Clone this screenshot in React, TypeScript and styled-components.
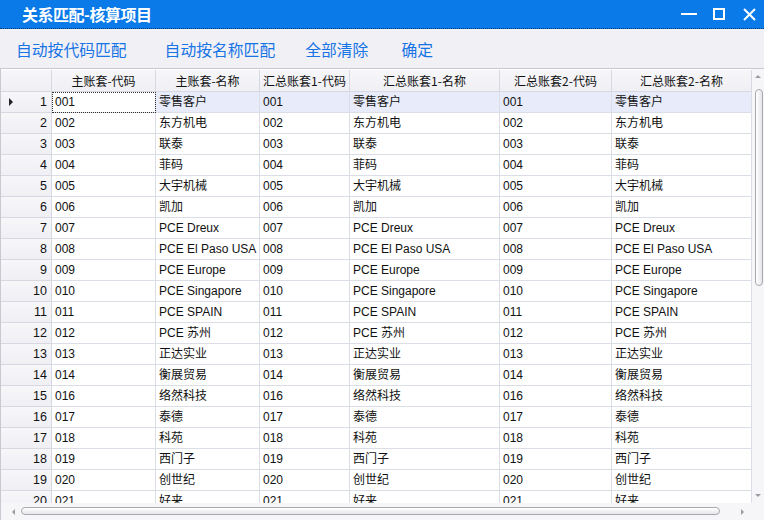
import React from 'react'
import styled, { createGlobalStyle } from 'styled-components'

const GlobalStyle = createGlobalStyle`
  html, body {
    margin: 0;
    padding: 0;
    overflow: hidden;
    background: #ffffff;
  }
`

const COLS = '51px 104px 104px 90px 150px 112px 140px'

const Window = styled.div`
  width: 764px;
  height: 520px;
  display: flex;
  flex-direction: column;
  background: #f1f0f5;
  font-family: 'Liberation Sans', 'Noto Sans CJK SC', sans-serif;
  overflow: hidden;
`

const TitleBar = styled.div`
  height: 28px;
  flex: none;
  display: flex;
  align-items: center;
  justify-content: space-between;
  background: #0a7ae9;
  border-bottom: 1px dotted #0b3a70;
  padding-left: 22px;
`

const Title = styled.div`
  color: #ffffff;
  font-family: 'Noto Sans CJK SC', sans-serif;
  font-size: 16px;
  font-weight: 700;
  letter-spacing: -0.5px;
`

const Controls = styled.div`
  display: flex;
  align-items: center;
  height: 100%;
`

const ControlButton = styled.div`
  width: 30px;
  height: 28px;
  display: flex;
  align-items: center;
  justify-content: center;
`

const Toolbar = styled.div`
  height: 39px;
  flex: none;
  display: flex;
  align-items: center;
  padding-left: 16px;
  padding-top: 1px;
  box-sizing: border-box;
`

const ToolLink = styled.span<{ $gap: number }>`
  color: #1774e5;
  font-family: 'Noto Sans CJK SC', sans-serif;
  font-size: 15.8px;
  margin-right: ${({ $gap }) => $gap}px;
  cursor: pointer;
`

const GridFrame = styled.div`
  flex: 1;
  display: flex;
  flex-direction: column;
  background: #ffffff;
  border-top: 1px solid #c9c9d2;
  border-left: 1px solid #c9c9d2;
  min-height: 0;
`

const GridMain = styled.div`
  flex: 1;
  display: flex;
  min-height: 0;
`

const Body = styled.div`
  flex: 1;
  overflow: hidden;
  padding-top: 1px;
`

const Row = styled.div`
  display: grid;
  grid-template-columns: ${COLS};
  height: 21px;
`

const HeaderRow = styled(Row)`
  height: 22px;
`

const HeadCell = styled.div`
  background: linear-gradient(#f7f7fa, #efeff4);
  border-right: 1px solid #d6d8e2;
  border-bottom: 1px solid #d6d8e2;
  font-family: 'Noto Sans CJK SC', sans-serif;
  font-size: 12px;
  line-height: 21px;
  color: #111;
  text-align: center;
  white-space: nowrap;
  overflow: hidden;
`

const RowHead = styled.div`
  background: linear-gradient(#f7f7fa, #efeff4);
  border-right: 1px solid #d6d8e2;
  border-bottom: 1px solid #d6d8e2;
  position: relative;
  text-align: right;
  padding-right: 4px;
  font-size: 12.5px;
  line-height: 20px;
  color: #111;
`

const Pointer = styled.span`
  position: absolute;
  left: 8px;
  top: 6px;
  width: 0;
  height: 0;
  border-top: 4px solid transparent;
  border-bottom: 4px solid transparent;
  border-left: 4px solid #222;
`

const Cell = styled.div<{ $selected?: boolean; $focus?: boolean }>`
  background: ${({ $selected, $focus }) => ($focus ? '#ffffff' : $selected ? '#e8ecfa' : '#ffffff')};
  border-right: 1px solid #dcdee7;
  border-bottom: 1px solid #dcdee7;
  outline: ${({ $focus }) => ($focus ? '1px dotted #333' : 'none')};
  outline-offset: -1px;
  font-family: 'Liberation Sans', 'Noto Sans CJK SC', sans-serif;
  font-size: 12px;
  line-height: 20px;
  color: #111;
  padding-left: 3px;
  white-space: nowrap;
  overflow: hidden;
`

const VScroll = styled.div`
  width: 12px;
  flex: none;
  background: #f6f6f8;
  position: relative;
`

const VThumb = styled.div`
  position: absolute;
  left: 3px;
  top: 20px;
  width: 6px;
  height: 195px;
  border: 1px solid #a9a9b0;
  border-radius: 4px;
  background: linear-gradient(90deg, #ffffff, #e6e6ea);
`

const Arrow = styled.span<{ $dir: 'up' | 'down' | 'left' | 'right' }>`
  position: absolute;
  width: 0;
  height: 0;
  ${({ $dir }) =>
    $dir === 'up'
      ? 'top: 6px; left: 3px; border-left: 3px solid transparent; border-right: 3px solid transparent; border-bottom: 3px solid #9a9aa2;'
      : $dir === 'down'
        ? 'bottom: 6px; left: 3px; border-left: 3px solid transparent; border-right: 3px solid transparent; border-top: 3px solid #9a9aa2;'
        : $dir === 'left'
          ? 'left: 11px; top: 6px; border-top: 3px solid transparent; border-bottom: 3px solid transparent; border-right: 3px solid #9a9aa2;'
          : 'right: 20px; top: 6px; border-top: 3px solid transparent; border-bottom: 3px solid transparent; border-left: 3px solid #9a9aa2;'}
`

const HScroll = styled.div`
  height: 17px;
  flex: none;
  background: #f6f6f8;
  position: relative;
`

const HThumb = styled.div`
  position: absolute;
  left: 20px;
  top: 4px;
  width: 697px;
  height: 6px;
  border: 1px solid #a9a9b0;
  border-radius: 4px;
  background: linear-gradient(#ffffff, #e6e6ea);
`

const headers = ['主账套-代码', '主账套-名称', '汇总账套1-代码', '汇总账套1-名称', '汇总账套2-代码', '汇总账套2-名称']

const data: [string, string][] = [
  ['001', '零售客户'],
  ['002', '东方机电'],
  ['003', '联泰'],
  ['004', '菲码'],
  ['005', '大宇机械'],
  ['006', '凯加'],
  ['007', 'PCE Dreux'],
  ['008', 'PCE El Paso USA'],
  ['009', 'PCE Europe'],
  ['010', 'PCE Singapore'],
  ['011', 'PCE SPAIN'],
  ['012', 'PCE 苏州'],
  ['013', '正达实业'],
  ['014', '衡展贸易'],
  ['016', '络然科技'],
  ['017', '泰德'],
  ['018', '科苑'],
  ['019', '西门子'],
  ['020', '创世纪'],
  ['021', '好来'],
]

const App: React.FC = () => {
  return (
    <>
      <GlobalStyle />
      <Window>
        <TitleBar>
          <Title>关系匹配-核算项目</Title>
          <Controls>
            <ControlButton>
              <svg width="16" height="16" viewBox="0 0 16 16">
                <rect x="0" y="7" width="16" height="2" fill="#fff" />
              </svg>
            </ControlButton>
            <ControlButton>
              <svg width="12" height="12" viewBox="0 0 12 12">
                <rect x="1" y="1" width="10" height="10" fill="none" stroke="#fff" strokeWidth="2" />
              </svg>
            </ControlButton>
            <ControlButton>
              <svg width="13" height="13" viewBox="0 0 13 13">
                <path d="M1 1 L12 12 M12 1 L1 12" stroke="#fff" strokeWidth="2" />
              </svg>
            </ControlButton>
          </Controls>
        </TitleBar>
        <Toolbar>
          <ToolLink $gap={38}>自动按代码匹配</ToolLink>
          <ToolLink $gap={30}>自动按名称匹配</ToolLink>
          <ToolLink $gap={33}>全部清除</ToolLink>
          <ToolLink $gap={0}>确定</ToolLink>
        </Toolbar>
        <GridFrame>
          <GridMain>
            <Body>
              <HeaderRow>
                <HeadCell />
                {headers.map((h) => (
                  <HeadCell key={h}>{h}</HeadCell>
                ))}
              </HeaderRow>
              {data.map(([code, name], i) => {
                const selected = i === 0
                return (
                  <Row key={code}>
                    <RowHead>
                      {selected && <Pointer />}
                      {i + 1}
                    </RowHead>
                    <Cell $selected={selected} $focus={selected}>
                      {code}
                    </Cell>
                    <Cell $selected={selected}>{name}</Cell>
                    <Cell $selected={selected}>{code}</Cell>
                    <Cell $selected={selected}>{name}</Cell>
                    <Cell $selected={selected}>{code}</Cell>
                    <Cell $selected={selected}>{name}</Cell>
                  </Row>
                )
              })}
            </Body>
            <VScroll>
              <Arrow $dir="up" />
              <VThumb />
              <Arrow $dir="down" />
            </VScroll>
          </GridMain>
          <HScroll>
            <Arrow $dir="left" />
            <HThumb />
            <Arrow $dir="right" />
          </HScroll>
        </GridFrame>
      </Window>
    </>
  )
}

export default App
